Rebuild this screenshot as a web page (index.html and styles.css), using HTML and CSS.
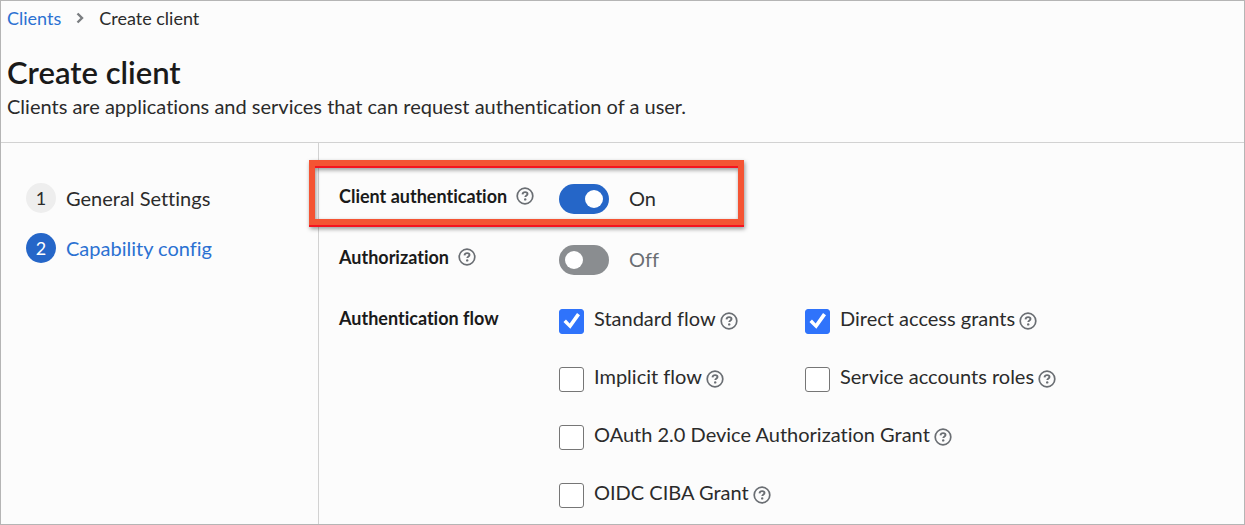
FILE: index.html
```html
<!DOCTYPE html>
<html lang="en">
<head>
    <meta charset="UTF-8">
    <meta name="viewport" content="width=device-width, initial-scale=1.0">
    <title>Create client</title>
    <link rel="stylesheet" href="styles.css">
</head>
<body>
    <!-- Shared icon -->
    <svg class="sprite" aria-hidden="true">
        <symbol id="help" viewBox="0 0 18 18">
            <circle cx="9" cy="9" r="7.8" fill="none" stroke="currentColor" stroke-width="1.7"/>
            <path d="M6.5 7.3C6.7 5.8 7.7 5.1 9.1 5.1c1.4 0 2.4.8 2.4 1.9 0 1.5-2.2 1.5-2.2 3.1" fill="none" stroke="currentColor" stroke-width="1.9"/>
            <circle cx="9.2" cy="12.4" r="1.2" fill="currentColor"/>
        </symbol>
    </svg>

    <div class="page">
        <header class="page-header">
            <nav class="breadcrumb" aria-label="Breadcrumb">
                <a href="#">Clients</a>
                <svg class="chevron" viewBox="0 0 8 12" aria-hidden="true"><path d="M1.5 1.5L6 6l-4.5 4.5" fill="none" stroke="currentColor" stroke-width="2.4"/></svg>
                <span>Create client</span>
            </nav>
            <h1>Create client</h1>
            <p>Clients are applications and services that can request authentication of a user.</p>
        </header>

        <main class="wizard">
            <nav class="steps" aria-label="Steps">
                <a class="step" href="#"><span class="step-number">1</span>General Settings</a>
                <a class="step current" href="#"><span class="step-number">2</span>Capability config</a>
            </nav>

            <form class="wizard-form">
                <div class="form-row highlight">
                    <div class="form-label">
                        <label for="clientAuth">Client authentication</label>
                        <button type="button" class="help" aria-label="Help"><svg><use href="#help"/></svg></button>
                    </div>
                    <div class="switch-row">
                        <input type="checkbox" role="switch" class="switch" id="clientAuth" checked>
                        <label for="clientAuth">On</label>
                    </div>
                </div>

                <div class="form-row">
                    <div class="form-label">
                        <label for="authorization">Authorization</label>
                        <button type="button" class="help" aria-label="Help"><svg><use href="#help"/></svg></button>
                    </div>
                    <div class="switch-row">
                        <input type="checkbox" role="switch" class="switch" id="authorization">
                        <label for="authorization">Off</label>
                    </div>
                </div>

                <div class="form-row" role="group" aria-labelledby="flowLabel">
                    <div class="form-label"><span id="flowLabel">Authentication flow</span></div>
                    <div class="flows">
                        <div class="check">
                            <input type="checkbox" id="standard" checked>
                            <label for="standard">Standard flow</label>
                            <button type="button" class="help" aria-label="Help"><svg><use href="#help"/></svg></button>
                        </div>
                        <div class="check">
                            <input type="checkbox" id="direct" checked>
                            <label for="direct">Direct access grants</label>
                            <button type="button" class="help" aria-label="Help"><svg><use href="#help"/></svg></button>
                        </div>
                        <div class="check">
                            <input type="checkbox" id="implicit">
                            <label for="implicit">Implicit flow</label>
                            <button type="button" class="help" aria-label="Help"><svg><use href="#help"/></svg></button>
                        </div>
                        <div class="check">
                            <input type="checkbox" id="service">
                            <label for="service">Service accounts roles</label>
                            <button type="button" class="help" aria-label="Help"><svg><use href="#help"/></svg></button>
                        </div>
                        <div class="check wide">
                            <input type="checkbox" id="device">
                            <label for="device">OAuth 2.0 Device Authorization Grant</label>
                            <button type="button" class="help" aria-label="Help"><svg><use href="#help"/></svg></button>
                        </div>
                        <div class="check wide">
                            <input type="checkbox" id="ciba">
                            <label for="ciba">OIDC CIBA Grant</label>
                            <button type="button" class="help" aria-label="Help"><svg><use href="#help"/></svg></button>
                        </div>
                    </div>
                </div>
            </form>
        </main>
    </div>
</body>
</html>
```
FILE: styles.css
```css
*,
*::before,
*::after {
    box-sizing: border-box;
}

body {
    margin: 0;
    font-family: Lato, "Open Sans", sans-serif;
    font-size: 20px;
    font-variant-ligatures: none;
    line-height: 28px;
    color: #2b2b2b;
    background: #fcfcfc;
}

.sprite {
    display: none;
}

.page {
    display: flex;
    flex-direction: column;
    min-height: 100vh;
    border: 1px solid #b5b5b5;
}

a {
    color: #2b71d2;
    text-decoration: none;
}

/* Header */
.page-header {
    padding: 5px 6px 22px;
    border-bottom: 1px solid #d2d2d2;
}

.breadcrumb {
    display: flex;
    align-items: center;
    gap: 15px;
    font-size: 18px;
    line-height: 24px;
}

.chevron {
    width: 8px;
    height: 12px;
    color: #7a7d80;
}

h1 {
    margin: 24px 0 2px;
    font-size: 31px;
    line-height: 36px;
    font-weight: 600;
    color: #1a1a1a;
}

p {
    margin: 0;
}

/* Wizard */
.wizard {
    display: flex;
    flex: 1;
}

.steps {
    display: flex;
    flex-direction: column;
    gap: 20px;
    flex: 0 0 317px;
    padding: 40px 25px;
}

.step {
    display: flex;
    align-items: center;
    gap: 10px;
    height: 30px;
    color: #2b2b2b;
}

.step-number {
    width: 30px;
    line-height: 30px;
    border-radius: 50%;
    background: #eee;
    font-size: 18px;
    text-align: center;
}

.step.current {
    color: #2b71d2;
}

.step.current .step-number {
    background: #2566c8;
    color: #fff;
}

.wizard-form {
    flex: 1;
    display: flex;
    flex-direction: column;
    gap: 31px;
    padding: 41px 20px 14px;
    border-left: 1px solid #d2d2d2;
}

.form-row {
    display: grid;
    grid-template-columns: 220px 1fr;
    position: relative;
}

.form-label {
    display: flex;
    align-items: center;
    gap: 9px;
    height: 24px;
    font-size: 18px;
    font-weight: 700;
    color: #1a1a1a;
}

.help {
    display: flex;
    padding: 0;
    border: 0;
    background: none;
    color: #6a6e73;
    cursor: pointer;
}

.help svg {
    width: 18px;
    height: 18px;
}

/* Callout frame over the first row */
.highlight::after {
    content: "";
    position: absolute;
    top: -24px;
    left: -30px;
    width: 435px;
    height: 65px;
    border: 6px solid #f45433;
    filter: drop-shadow(0 2px 0 #f5141f) drop-shadow(1px 2px 2px rgba(0, 0, 0, 0.4));
    pointer-events: none;
}

.switch-row {
    display: flex;
    align-items: center;
    gap: 20px;
    height: 30px;
}

.switch {
    appearance: none;
    display: flex;
    align-items: center;
    width: 50px;
    height: 30px;
    margin: 0;
    padding: 0 6px;
    border-radius: 15px;
    background: #8a8d90;
}

.switch::before {
    content: "";
    width: 18px;
    height: 18px;
    border-radius: 50%;
    background: #fff;
}

.switch:checked {
    justify-content: flex-end;
    background: #2566c8;
}

.switch + label {
    padding-bottom: 2px;
    color: #6a6e73;
}

.switch:checked + label {
    color: #2b2b2b;
}

/* Authentication flow */
.flows {
    display: grid;
    grid-template-columns: 246px 1fr;
    row-gap: 28px;
}

.check {
    display: flex;
    align-items: center;
    height: 30px;
}

.check.wide {
    grid-column: 1 / -1;
}

.check input {
    appearance: none;
    flex: none;
    width: 25px;
    height: 25px;
    margin: 0 10px 0 0;
    border: 1px solid #767676;
    border-radius: 3px;
    background: #fff;
}

.check input:checked {
    border-color: #2f73fb;
    background: #2f73fb;
}

.check input:checked::before {
    content: "";
    display: block;
    height: 100%;
    background: #fff;
    clip-path: polygon(15% 54%, 26% 43%, 42% 61%, 74% 15%, 87% 25%, 45% 84%);
}

.check label {
    padding-bottom: 6px;
    margin-right: 4px;
}
```
